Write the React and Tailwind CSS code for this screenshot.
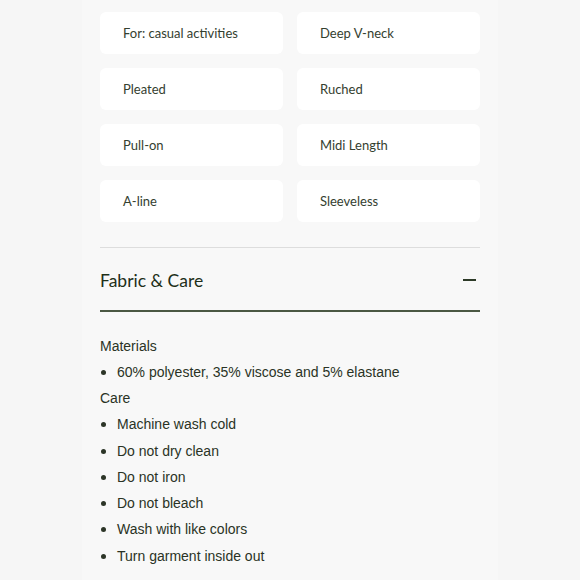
const attributes = [
  'For: casual activities',
  'Deep V-neck',
  'Pleated',
  'Ruched',
  'Pull-on',
  'Midi Length',
  'A-line',
  'Sleeveless',
];

const materials = ['60% polyester, 35% viscose and 5% elastane'];
const care = [
  'Machine wash cold',
  'Do not dry clean',
  'Do not iron',
  'Do not bleach',
  'Wash with like colors',
  'Turn garment inside out',
];

function Bullet({ children }) {
  return (
    <li className="flex items-center h-[26.25px]">
      <span className="w-[5px] h-[5px] rounded-full bg-[#2c3527] ml-[1px] mr-[11px]" />
      <span>{children}</span>
    </li>
  );
}

export default function App() {
  return (
    <div className="w-[580px] h-[580px] overflow-hidden bg-[#f6f6f6] flex justify-center">
      <div className="w-[416px] bg-[#f8f8f8] px-[18px] pt-[12px]">
        {/* Attribute chips */}
        <div className="grid grid-cols-2 gap-[14px] font-['Lato',sans-serif] text-[13px] text-[#34402f]">
          {attributes.map((a) => (
            <div key={a} className="h-[42px] bg-white rounded-[6px] flex items-center pl-[23px] pt-[2px]">
              {a}
            </div>
          ))}
        </div>

        <div className="mt-[25px] border-t border-[#dddddd]" />

        {/* Fabric & Care accordion */}
        <div className="h-[64px] flex items-center justify-between border-b-2 border-[#4b5843]">
          <span className="font-['Lato',sans-serif] text-[17.5px] text-[#1e2f19] pt-[4px]">Fabric &amp; Care</span>
          <span className="w-[13px] h-[1.5px] bg-[#2d3a28] mr-[4px] mt-[2px]" />
        </div>

        <div className="pt-[21px] font-['Liberation_Sans',Arial,sans-serif] text-[14px] text-[#2a3325]">
          <div className="h-[26.25px] flex items-center">Materials</div>
          <ul>
            {materials.map((m) => (
              <Bullet key={m}>{m}</Bullet>
            ))}
          </ul>
          <div className="h-[26.25px] flex items-center">Care</div>
          <ul>
            {care.map((c) => (
              <Bullet key={c}>{c}</Bullet>
            ))}
          </ul>
        </div>
      </div>
    </div>
  );
}
